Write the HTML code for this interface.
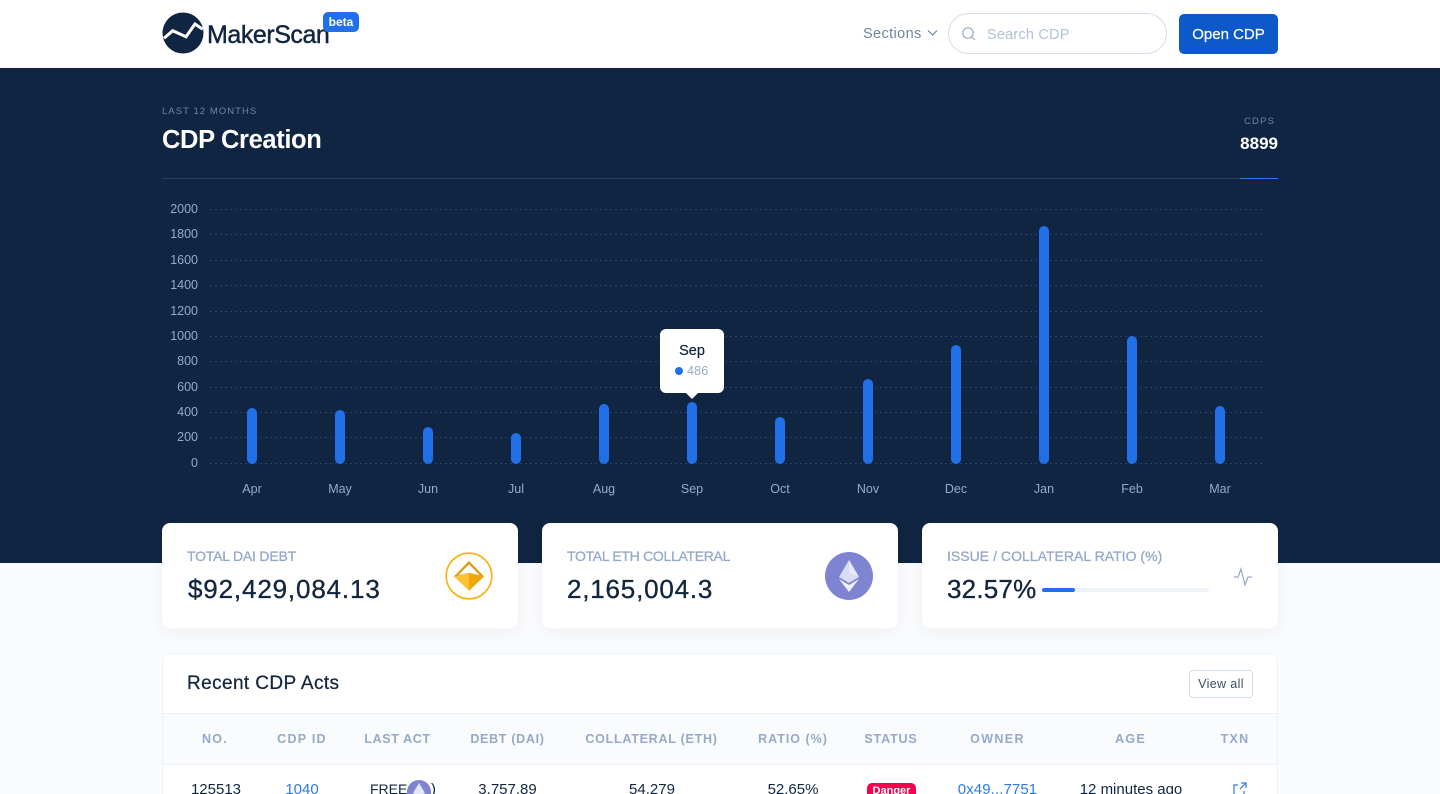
<!DOCTYPE html>
<html lang="en"><head><meta charset="utf-8"><title>MakerScan</title>
<style>
html,body{margin:0;padding:0;width:1440px;height:794px;overflow:hidden}
body{background:#f9fbfd;font-family:"Liberation Sans",sans-serif;color:#12263f}
#w{position:absolute;left:0;top:0;width:1440px;height:794px;overflow:hidden;background:#f9fbfd}
.a{position:absolute;white-space:nowrap}
.c{transform:translateX(-50%)}
.r{transform:translateX(-100%)}
.card{position:absolute;top:523px;width:356px;height:105px;background:#fff;border-radius:8px;box-shadow:0 4px 16px rgba(18,38,63,.05);border:0}
.lab{position:absolute;white-space:nowrap;top:546.5px;font-size:14px;line-height:18px;color:#95aac9;-webkit-text-stroke:.3px #95aac9}
.val{position:absolute;white-space:nowrap;top:574px;font-size:26px;line-height:30px;color:#12263f;-webkit-text-stroke:.35px #12263f}
.g{position:absolute;left:210px;width:1054px;height:1px;background:repeating-linear-gradient(90deg,#2b4265 0 2px,transparent 2px 5px)}
.y{position:absolute;right:1242px;font-size:12.5px;line-height:14px;color:#95aac9;white-space:nowrap}
.b{position:absolute;width:10px;background:#2170ea;border-radius:5px;transform:translateX(-5px)}
.m{position:absolute;top:482px;font-size:12.5px;line-height:15px;color:#95aac9;transform:translateX(-50%);white-space:nowrap}
.th{position:absolute;top:732px;font-size:12.5px;line-height:15px;font-weight:bold;letter-spacing:1.25px;color:#95aac9;transform:translateX(-50%);white-space:nowrap}
.td{position:absolute;top:781px;font-size:15px;line-height:17px;color:#12263f;transform:translateX(-50%);white-space:nowrap}
.l{color:#2c7be5}
</style></head><body><div id="w">

<div class="a" style="left:0;top:0;width:1440px;height:68px;background:#fff"></div>
<svg class="a" style="left:162px;top:12px" width="42" height="42" viewBox="0 0 42 42"><circle cx="21" cy="21" r="20.5" fill="#102542"/><path d="M2 26.3 L10.7 18.7 L24 24.7 L33 12 L40.7 17.3" fill="none" stroke="#fff" stroke-width="3"/></svg>
<div class="a" style="left:207px;top:20px;font-size:25px;line-height:30px;letter-spacing:-.45px;color:#102542;-webkit-text-stroke:.45px #102542">MakerScan</div>
<div class="a" style="left:323px;top:12px;width:36px;height:20px;background:#2170ea;border-radius:5px;color:#fff;font-size:12px;line-height:20px;font-weight:bold;text-align:center">beta</div>

<div class="a" style="left:863px;top:25px;font-size:14.5px;line-height:18px;letter-spacing:.38px;color:#6e84a3">Sections</div>
<svg class="a" style="left:927px;top:29px" width="11" height="8" viewBox="0 0 11 8"><path d="M1 1.5 L5.5 6 L10 1.5" fill="none" stroke="#6e84a3" stroke-width="1.2"/></svg>
<div class="a" style="left:948px;top:13px;width:217px;height:39px;border:1px solid #d2ddec;border-radius:21px;background:#fff"></div>
<svg class="a" style="left:961px;top:26px" width="16" height="16" viewBox="0 0 16 16"><circle cx="7" cy="7" r="5.2" fill="none" stroke="#95aac9" stroke-width="1.2"/><path d="M11 11 L14 14" stroke="#95aac9" stroke-width="1.2"/></svg>
<div class="a" style="left:987px;top:26px;font-size:14.5px;line-height:18px;letter-spacing:.2px;color:#b1c2d9">Search CDP</div>
<div class="a" style="left:1179px;top:14px;width:99px;height:40px;background:#0e59c9;border-radius:5px;color:#fff;font-size:15px;line-height:41px;text-align:center;-webkit-text-stroke:.2px #fff">Open CDP</div>

<div class="a" style="left:0;top:68px;width:1440px;height:495px;background:#102542"></div>
<div class="a" style="left:162px;top:106px;font-size:9.5px;line-height:12px;letter-spacing:1.05px;color:#6e84a3">LAST 12 MONTHS</div>
<div class="a" style="left:162px;top:124px;font-size:25.5px;line-height:32px;letter-spacing:-.37px;color:#fff;font-weight:bold">CDP Creation</div>
<div class="a" style="left:1244px;top:116px;font-size:9.5px;line-height:12px;letter-spacing:1.2px;color:#6e84a3">CDPS</div>
<div class="a r" style="left:1278px;top:133px;font-size:17px;line-height:21px;font-weight:bold;color:#fff;letter-spacing:0">8899</div>
<div class="a" style="left:162px;top:178px;width:1116px;height:1px;background:#283e5f"></div>
<div class="a" style="left:1240px;top:178px;width:38px;height:1px;background:#2c7be5"></div>

<div class="g" style="top:209px"></div><div class="g" style="top:234px"></div><div class="g" style="top:260px"></div><div class="g" style="top:285px"></div><div class="g" style="top:311px"></div><div class="g" style="top:336px"></div><div class="g" style="top:361px"></div><div class="g" style="top:387px"></div><div class="g" style="top:412px"></div><div class="g" style="top:437px"></div><div class="g" style="top:463px"></div>
<div class="y" style="top:202px">2000</div><div class="y" style="top:227px">1800</div><div class="y" style="top:253px">1600</div><div class="y" style="top:278px">1400</div><div class="y" style="top:304px">1200</div><div class="y" style="top:329px">1000</div><div class="y" style="top:354px">800</div><div class="y" style="top:380px">600</div><div class="y" style="top:405px">400</div><div class="y" style="top:430px">200</div><div class="y" style="top:456px">0</div>

<div class="b" style="left:252px;top:408px;height:56px"></div><div class="b" style="left:340px;top:410px;height:54px"></div><div class="b" style="left:428px;top:427px;height:37px"></div><div class="b" style="left:516px;top:433px;height:31px"></div><div class="b" style="left:604px;top:404px;height:60px"></div><div class="b" style="left:692px;top:402px;height:62px"></div><div class="b" style="left:780px;top:417px;height:47px"></div><div class="b" style="left:868px;top:379px;height:85px"></div><div class="b" style="left:956px;top:345px;height:119px"></div><div class="b" style="left:1044px;top:226px;height:238px"></div><div class="b" style="left:1132px;top:336px;height:128px"></div><div class="b" style="left:1220px;top:406px;height:58px"></div>

<div class="m" style="left:252px">Apr</div><div class="m" style="left:340px">May</div><div class="m" style="left:428px">Jun</div><div class="m" style="left:516px">Jul</div><div class="m" style="left:604px">Aug</div><div class="m" style="left:692px">Sep</div><div class="m" style="left:780px">Oct</div><div class="m" style="left:868px">Nov</div><div class="m" style="left:956px">Dec</div><div class="m" style="left:1044px">Jan</div><div class="m" style="left:1132px">Feb</div><div class="m" style="left:1220px">Mar</div>

<div class="a" style="left:660px;top:329px;width:64px;height:64px;background:#fff;border-radius:6px"></div>
<div class="a" style="left:686px;top:393px;width:0;height:0;border-left:6px solid transparent;border-right:6px solid transparent;border-top:6px solid #fff"></div>
<div class="a c" style="left:692px;top:342px;font-size:14.5px;line-height:18px;color:#12263f;-webkit-text-stroke:.2px #12263f">Sep</div>
<div class="a" style="left:675px;top:367px;width:8px;height:8px;border-radius:50%;background:#2170ea"></div>
<div class="a" style="left:687px;top:364px;font-size:12.5px;line-height:15px;letter-spacing:.2px;color:#95aac9">486</div>

<div class="card" style="left:162px"></div>
<div class="card" style="left:542px"></div>
<div class="card" style="left:922px"></div>
<div class="lab" style="left:187px;letter-spacing:-.2px">TOTAL DAI DEBT</div>
<div class="val" style="left:188px;letter-spacing:.85px">$92,429,084.13</div>
<svg class="a" style="left:445px;top:552px" width="48" height="48" viewBox="0 0 48 48"><circle cx="24" cy="24" r="22.8" fill="#fff" stroke="#fcb00f" stroke-width="1.6"/><path d="M24 9 L39 24.5 L24 38.7 L9 24.5Z" fill="#fdc134"/><path d="M24 9 L39 24.5 L24 21 L9 24.5Z" fill="#dd9c10"/><path d="M24 12.3 L34.7 23.3 L24 20.7 L13.3 23.3Z" fill="#fff"/><path d="M24 21 L39 24.5 L24 38.7Z" fill="#eda80d"/></svg>
<div class="lab" style="left:567px;letter-spacing:-.3px">TOTAL ETH COLLATERAL</div>
<div class="val" style="left:567px;letter-spacing:.8px">2,165,004.3</div>
<svg class="a" style="left:825px;top:552px" width="48" height="48" viewBox="0 0 48 48"><circle cx="24" cy="24" r="24" fill="#7e84d1"/><path d="M24 8 L34 25 L24 31 L14 25Z" fill="#d9dbf2"/><path d="M24 8 L34 25 L24 21 Z" fill="#e6e8f7"/><path d="M14 27 L24 33 L34 27 L24 40Z" fill="#f0f1fb"/></svg>
<div class="lab" style="left:947px;letter-spacing:.03px">ISSUE / COLLATERAL RATIO (%)</div>
<div class="val" style="left:947px;letter-spacing:.2px">32.57%</div>
<div class="a" style="left:1042px;top:588px;width:167px;height:4px;border-radius:2px;background:#edf2f9"></div>
<div class="a" style="left:1042px;top:588px;width:33px;height:4px;border-radius:2px;background:#2170ea"></div>
<svg class="a" style="left:1233px;top:567px" width="20" height="20" viewBox="0 0 20 20"><path d="M1 10 H5 L8 2 L12 18 L15 10 H19" fill="none" stroke="#95aac9" stroke-width="1.2"/></svg>

<div class="a" style="left:162px;top:653px;width:1114px;height:150px;background:#fff;border:1px solid #edf2f9;border-radius:8px;overflow:hidden">
<div style="position:absolute;left:0;top:59px;width:1114px;height:50px;background:#f9fbfd;border-top:1px solid #edf2f9;border-bottom:1px solid #edf2f9"></div>
</div>
<div class="a" style="left:187px;top:672px;font-size:19px;line-height:23px;letter-spacing:.4px;color:#12263f;-webkit-text-stroke:.25px #12263f">Recent CDP Acts</div>
<div class="a" style="left:1189px;top:670px;width:62px;height:26px;border:1px solid #d2ddec;border-radius:4px;background:#fff;color:#3b506c;font-size:12.5px;letter-spacing:.35px;line-height:26px;text-align:center">View all</div>

<div class="th" style="left:215px">NO.</div>
<div class="th" style="left:302px">CDP ID</div>
<div class="th" style="left:397.5px;letter-spacing:.6px">LAST ACT</div>
<div class="th" style="left:507.5px;letter-spacing:.7px">DEBT (DAI)</div>
<div class="th" style="left:651.5px;letter-spacing:.75px">COLLATERAL (ETH)</div>
<div class="th" style="left:793px;letter-spacing:1px">RATIO (%)</div>
<div class="th" style="left:891px;letter-spacing:.85px">STATUS</div>
<div class="th" style="left:997.5px;letter-spacing:1.35px">OWNER</div>
<div class="th" style="left:1130.5px">AGE</div>
<div class="th" style="left:1235px">TXN</div>

<div class="td" style="left:216px">125513</div>
<div class="td l" style="left:302px">1040</div>
<div class="td" style="left:370px;transform:none;font-size:14px">FREE(</div>
<svg class="a" style="left:407px;top:780px" width="24" height="24" viewBox="0 0 24 24"><circle cx="12" cy="12" r="12" fill="#7e84d1"/><path d="M12 3 L18 13 L12 17 L6 13Z" fill="#e4e6f7"/></svg>
<div class="td" style="left:431px;transform:none">)</div>
<div class="td" style="left:507.5px">3,757.89</div>
<div class="td" style="left:652px">54.279</div>
<div class="td" style="left:793px">52.65%</div>
<div class="a" style="left:867px;top:783px;width:49px;height:20px;background:#f5004f;border-radius:5px;color:#fff;font-size:11px;font-weight:bold;line-height:17px;text-align:center">Danger</div>
<div class="td l" style="left:997.5px;letter-spacing:.1px">0x49...7751</div>
<div class="td" style="left:1131px">12 minutes ago</div>
<svg class="a" style="left:1232px;top:782px" width="15" height="15" viewBox="0 0 15 15"><path d="M6 3 H2 V14 H12 V9 M8 7 L13.5 1.5 M9 1 H14 V6" fill="none" stroke="#2c7be5" stroke-width="1.2"/></svg>

</div></body></html>
